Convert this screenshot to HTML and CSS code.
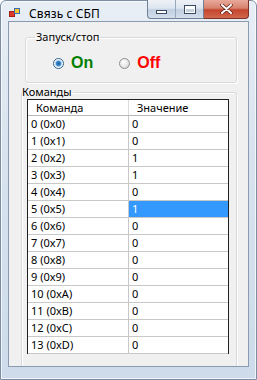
FILE: index.html
```html
<!DOCTYPE html>
<html lang="ru">
<head>
    <meta charset="UTF-8" />
    <meta name="viewport" content="width=device-width, initial-scale=1.0" />
    <title>Связь с СБП</title>
    <link rel="stylesheet" href="styles.css">
</head>
<body>
    <div class="window">
        <div class="titlebar">
            <svg class="app-icon" width="11" height="10" viewBox="0 0 11 10">
                <rect x="0.5" y="3.5" width="5" height="5" fill="#e03a2a" stroke="#a02018" />
                <rect x="5.5" y="0.5" width="5" height="5" fill="#f2c230" stroke="#3a6db0" />
            </svg>
            <span class="title">Связь с СБП</span>
            <div class="caption-buttons">
                <div class="cap-btn cap-min"><span class="glyph-min"></span></div>
                <div class="cap-btn cap-max"><span class="glyph-max"></span></div>
                <div class="cap-btn cap-close">
                    <svg width="13" height="10" viewBox="0 0 13 10">
                        <path d="M2 1 L11 9 M11 1 L2 9" stroke="#5a1a12" stroke-width="3.4" stroke-linecap="round" />
                        <path d="M2 1 L11 9 M11 1 L2 9" stroke="#ffffff" stroke-width="2" stroke-linecap="round" />
                    </svg>
                </div>
            </div>
        </div>

        <main class="client">
            <fieldset class="group group-run">
                <legend>Запуск/стоп</legend>
                <div class="radios">
                    <label class="radio">
                        <span class="radio-dot checked"></span>
                        <span class="radio-text on">On</span>
                    </label>
                    <label class="radio">
                        <span class="radio-dot"></span>
                        <span class="radio-text off">Off</span>
                    </label>
                </div>
            </fieldset>

            <fieldset class="group group-cmd">
                <legend>Команды</legend>
                <div class="grid">
                    <div class="grid-row grid-head">
                        <div class="cell head-cell">Команда</div>
                        <div class="cell head-cell">Значение</div>
                    </div>
                    <div class="grid-row"><div class="cell">0 (0x0)</div><div class="cell">0</div></div>
                    <div class="grid-row"><div class="cell">1 (0x1)</div><div class="cell">0</div></div>
                    <div class="grid-row"><div class="cell">2 (0x2)</div><div class="cell">1</div></div>
                    <div class="grid-row"><div class="cell">3 (0x3)</div><div class="cell">1</div></div>
                    <div class="grid-row"><div class="cell">4 (0x4)</div><div class="cell">0</div></div>
                    <div class="grid-row"><div class="cell">5 (0x5)</div><div class="cell selected">1</div></div>
                    <div class="grid-row"><div class="cell">6 (0x6)</div><div class="cell">0</div></div>
                    <div class="grid-row"><div class="cell">7 (0x7)</div><div class="cell">0</div></div>
                    <div class="grid-row"><div class="cell">8 (0x8)</div><div class="cell">0</div></div>
                    <div class="grid-row"><div class="cell">9 (0x9)</div><div class="cell">0</div></div>
                    <div class="grid-row"><div class="cell">10 (0xA)</div><div class="cell">0</div></div>
                    <div class="grid-row"><div class="cell">11 (0xB)</div><div class="cell">0</div></div>
                    <div class="grid-row"><div class="cell">12 (0xC)</div><div class="cell">0</div></div>
                    <div class="grid-row"><div class="cell">13 (0xD)</div><div class="cell">0</div></div>
                </div>
            </fieldset>
        </main>
    </div>
</body>
</html>
```

FILE: styles.css
```css
* {
    box-sizing: border-box;
}

body {
    margin: 0;
    padding: 0;
    background-color: #ffffff;
    font-family: 'Noto Sans', 'Open Sans', sans-serif;
    font-size: 11px;
    color: #000000;
}

.window {
    width: 257px;
    height: 380px;
    display: flex;
    flex-direction: column;
    border: 1px solid #7d8ea3;
    border-radius: 6px 6px 0 0;
    background: linear-gradient(to bottom, #e8eef6 0%, #d8e3ef 40%, #cddbea 100%);
    box-shadow: inset 0 0 0 1px rgba(255, 255, 255, 0.7);
    padding: 0 7px 12px 7px;
}

.titlebar {
    height: 20px;
    display: flex;
    align-items: flex-start;
    position: relative;
}

.app-icon {
    margin-top: 7px;
    margin-left: 1px;
}

.title {
    margin-top: 4px;
    margin-left: 9px;
    font-size: 12px;
    color: #000000;
    letter-spacing: 0.1px;
}

.caption-buttons {
    position: absolute;
    top: -1px;
    right: 0;
    display: flex;
    height: 19px;
}

.cap-btn {
    height: 19px;
    display: flex;
    align-items: center;
    justify-content: center;
    border: 1px solid #6f8198;
    border-top: none;
}

.cap-min {
    width: 28px;
    border-radius: 0 0 0 4px;
    border-right: none;
    background: linear-gradient(to bottom, #eef2f7 0%, #dde5ef 45%, #c2cfe0 55%, #d2deeb 100%);
}

.cap-max {
    width: 29px;
    border-left-color: #98a8bc;
    background: linear-gradient(to bottom, #eef2f7 0%, #dde5ef 45%, #c2cfe0 55%, #d2deeb 100%);
}

.cap-close {
    width: 45px;
    border-color: #7a3128;
    border-left: none;
    border-radius: 0 0 4px 0;
    background: linear-gradient(to bottom, #e9a99b 0%, #d7826f 45%, #c4452f 55%, #d2664b 100%);
}

.glyph-min {
    width: 11px;
    height: 4px;
    margin-top: 5px;
    background: #ffffff;
    border: 1px solid #3b4a5e;
}

.glyph-max {
    width: 12px;
    height: 9px;
    border: 1px solid #3b4a5e;
    box-shadow: inset 0 0 0 1px #ffffff, inset 0 2px 0 1px #ffffff;
}

.client {
    flex: 1;
    background-color: #f0f0f0;
    border: 1px solid #8a9bb0;
    padding: 8px 11px 0 16px;
    overflow: hidden;
}

.group {
    margin: 0;
    border: 1px solid #d5dadf;
    border-radius: 3px;
    box-shadow: inset 1px 1px 0 #ffffff, 1px 1px 0 #ffffff;
}

.group legend {
    font-size: 11px;
    color: #000000;
    line-height: 14px;
}

.group-run {
    height: 53px;
    padding: 0 8px;
}

.group-run legend {
    margin-left: 1px;
    padding: 0 1px;
}

.radios {
    display: flex;
    align-items: center;
    padding-left: 19px;
    padding-top: 10px;
}

.radio {
    display: flex;
    align-items: center;
    margin-right: 26px;
}

.radio-dot {
    width: 11px;
    height: 11px;
    border-radius: 50%;
    border: 1px solid #8e8f8f;
    background: radial-gradient(circle at 40% 35%, #ffffff 0%, #e3e3e3 60%, #c8c8c8 100%);
    margin-right: 7px;
}

.radio-dot.checked {
    border-color: #2c628b;
    background: radial-gradient(circle, #1a5c92 0%, #3c8bd1 35%, #a6c9e8 48%, #ffffff 60%, #e6eef5 100%);
}

.radio-text {
    font-family: 'Liberation Sans', Arial, sans-serif;
    font-weight: bold;
    font-size: 16px;
    line-height: 18px;
}

.radio-text.on {
    color: #008000;
}

.radio-text.off {
    color: #ff0000;
}

.group-cmd {
    margin-top: 2px;
    margin-left: -4px;
    height: 300px;
    padding: 0 7px 0 5px;
    border-bottom: none;
}

.group-cmd legend {
    margin-left: -5px;
    padding: 0 1px 0 0;
}

.grid {
    width: 202px;
    height: 255px;
    overflow: hidden;
    background: #ffffff;
    border: 1px solid #202020;
    border-bottom: none;
    margin-top: 0;
}

.grid-row {
    display: grid;
    grid-template-columns: 101px 1fr;
    height: 17px;
    border-bottom: 1px solid #c8c8c8;
}

.grid-head {
    height: 16px;
    border-bottom: 1px solid #b8b8b8;
}

.cell {
    padding-left: 3px;
    line-height: 16px;
    white-space: nowrap;
    color: #000000;
}

.cell:first-child {
    border-right: 1px solid #c8c8c8;
}

.head-cell {
    padding-left: 8px;
    line-height: 15px;
}

.head-cell:first-child {
    border-right-color: #dcdcdc;
}

.cell.selected {
    background-color: #3399ff;
    color: #ffffff;
}
```
